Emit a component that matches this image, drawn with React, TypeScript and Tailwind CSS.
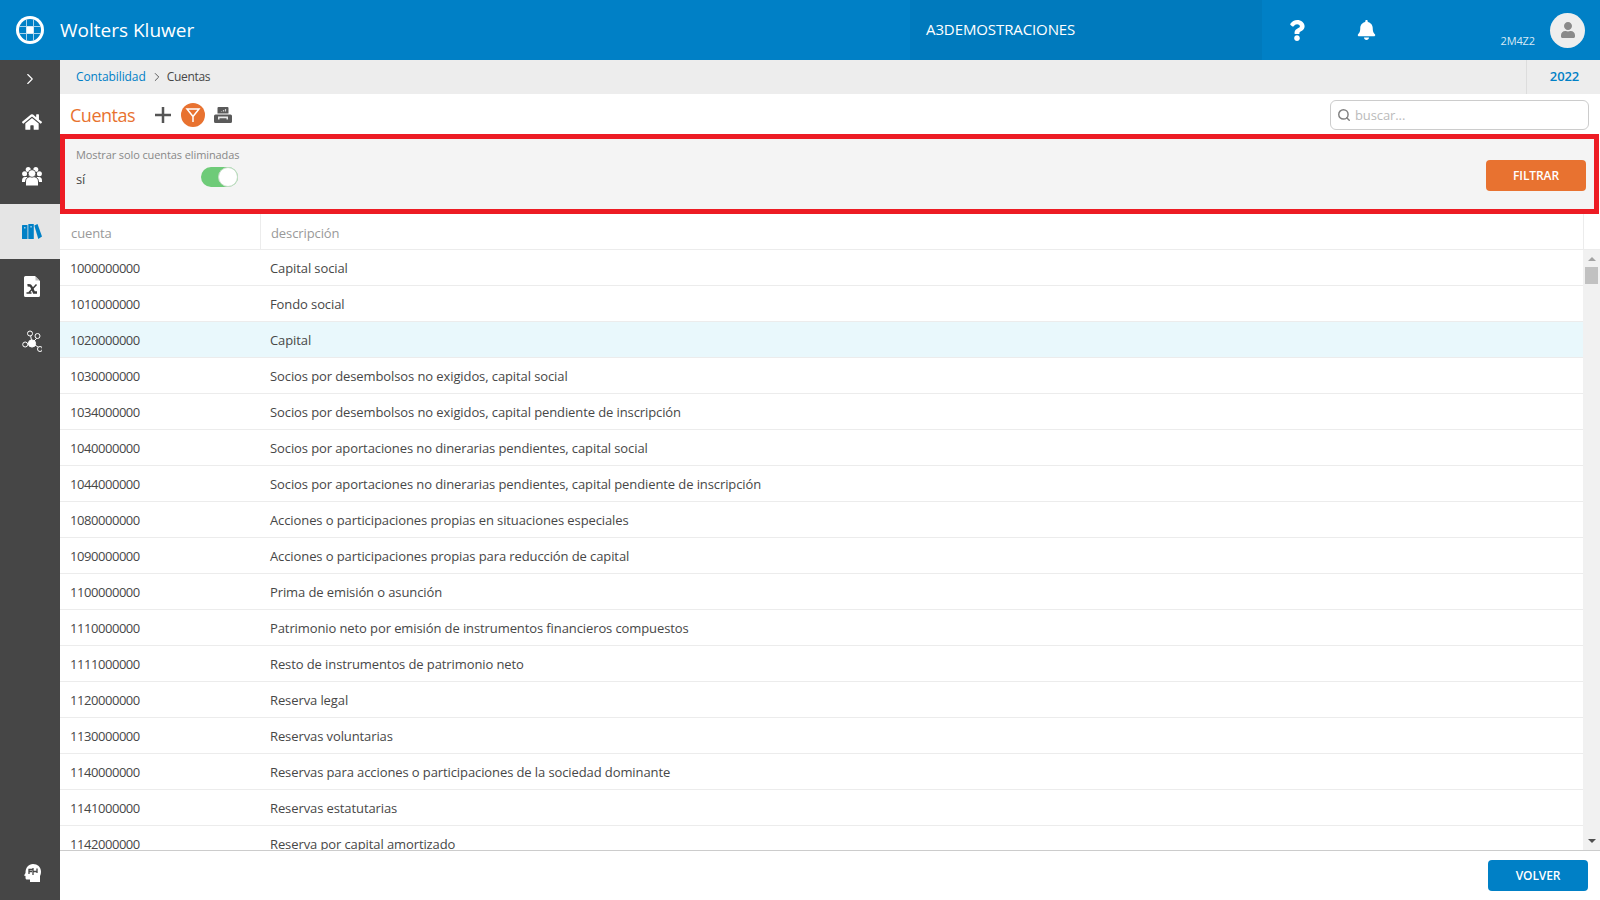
import { ChevronRight, Search } from 'lucide-react';
import { FaBell, FaHome, FaQuestion, FaUser } from 'react-icons/fa';

const rows = [
  ['1000000000', 'Capital social'],
  ['1010000000', 'Fondo social'],
  ['1020000000', 'Capital'],
  ['1030000000', 'Socios por desembolsos no exigidos, capital social'],
  ['1034000000', 'Socios por desembolsos no exigidos, capital pendiente de inscripción'],
  ['1040000000', 'Socios por aportaciones no dinerarias pendientes, capital social'],
  ['1044000000', 'Socios por aportaciones no dinerarias pendientes, capital pendiente de inscripción'],
  ['1080000000', 'Acciones o participaciones propias en situaciones especiales'],
  ['1090000000', 'Acciones o participaciones propias para reducción de capital'],
  ['1100000000', 'Prima de emisión o asunción'],
  ['1110000000', 'Patrimonio neto por emisión de instrumentos financieros compuestos'],
  ['1111000000', 'Resto de instrumentos de patrimonio neto'],
  ['1120000000', 'Reserva legal'],
  ['1130000000', 'Reservas voluntarias'],
  ['1140000000', 'Reservas para acciones o participaciones de la sociedad dominante'],
  ['1141000000', 'Reservas estatutarias'],
  ['1142000000', 'Reserva por capital amortizado'],
];

const Logo = () => (
  <svg width="28" height="28" viewBox="0 0 28 28" className="shrink-0">
    <circle cx="14" cy="14" r="14" fill="#fff" />
    <circle cx="14" cy="14" r="11" fill="#0080c6" />
    <path d="M10.500 3v22M17.500 3v22M3 10.500h22M3 17.500h22" stroke="#a9d3ec" strokeWidth="1" />
    <rect x="10.500" y="10.500" width="7" height="7" fill="#fff" />
  </svg>
);

const UsersIcon = () => (
  <svg width="20" height="19" viewBox="0 0 20 19" fill="#fff">
    <circle cx="6.200" cy="2.600" r="2.500" />
    <circle cx="13.800" cy="2.600" r="2.500" />
    <circle cx="2.600" cy="6.800" r="2.500" />
    <circle cx="17.400" cy="6.800" r="2.500" />
    <path d="M0 14c0-3 1.200-4 3-4h14c1.800 0 3 1 3 4v1H0z" />
    <path d="M3.500 19v-4c0-3.500 2-5.500 6.500-5.500s6.500 2 6.500 5.500v4z" stroke="#464646" strokeWidth="1" />
    <circle cx="10" cy="6.500" r="3.800" stroke="#464646" strokeWidth="0.800" />
  </svg>
);

const BooksIcon = () => (
  <svg width="20" height="15" viewBox="0 0 20 15" fill="#0080c6">
    <rect x="0" y="1" width="5.500" height="14" rx="0.500" />
    <rect x="6.300" y="0" width="5.500" height="15" rx="0.500" />
    <path d="M12.300 1.500 15.500 0 20 12.500 16.300 15z" />
    <rect x="2" y="3" width="1.500" height="1.500" fill="#9ccbe8" />
    <rect x="8.300" y="2" width="1.500" height="1.500" fill="#9ccbe8" />
  </svg>
);

const FileIcon = () => (
  <svg width="16" height="21" viewBox="0 0 16 21">
    <path d="M1.500 0H11l5 5v14.500a1.500 1.500 0 0 1-1.500 1.500h-13A1.500 1.500 0 0 1 0 19.500v-18A1.500 1.500 0 0 1 1.500 0z" fill="#fff" />
    <path d="M11.500 0.500 15.500 4.500h-4z" fill="#bdbdbd" />
    <path d="M3.500 9.500c2-.6 3.200 0 4 1.500l2.500 5.500h3" fill="none" stroke="#3c3c3c" strokeWidth="2.400" />
    <path d="M12.500 8.500 5 16.500M2.500 17h5" fill="none" stroke="#3c3c3c" strokeWidth="1.500" />
  </svg>
);

const NetworkIcon = () => (
  <svg width="20" height="24" viewBox="0 0 20 24" fill="none" stroke="#fff" strokeWidth="1">
    <path d="M10 13 8.500 5M10 13l5-5M10 13l-6 1.500M10 13l7.500 5" />
    <circle cx="10" cy="13.500" r="3.600" fill="#fff" />
    <circle cx="8" cy="3.500" r="2.500" fill="#464646" />
    <circle cx="15.500" cy="6" r="2.500" fill="#464646" />
    <circle cx="3.200" cy="14.500" r="2.500" fill="#464646" />
    <circle cx="18" cy="19" r="2.500" fill="#464646" />
  </svg>
);

const HeadIcon = () => (
  <svg width="17" height="18" viewBox="0 0 17 18">
    <path d="M9 0c4.500 0 8 3 8 7.500 0 2-.5 3.500-1 4.500v6H6v-2.500H3c-1 0-1.500-.7-1.500-1.500v-2L0 11.500 1.500 9C1.500 3.500 4.500 0 9 0z" fill="#fff" />
    <path d="M5 10V5.500h4M5.500 7.500H8M9 4v7M9 7.500h4M13 4.500V9" fill="none" stroke="#464646" strokeWidth="1.300" />
  </svg>
);

const PrintIcon = () => (
  <svg width="18" height="16" viewBox="0 0 18 16">
    <path d="M3.500 1a1 1 0 0 1 1-1h9a1 1 0 0 1 1 1v5.500h-11z" fill="#5a5a5a" />
    <path d="M7.500 4.500V4M9.500 4.500V3M11.500 4.500V2" stroke="#d0d0d0" strokeWidth="1.200" />
    <path d="M0 9a1.500 1.500 0 0 1 1.500-1.500h15A1.500 1.500 0 0 1 18 9v5.500a1.500 1.500 0 0 1-1.500 1.500h-15A1.500 1.500 0 0 1 0 14.500z" fill="#5a5a5a" />
    <path d="M4 9.500h10v3h-1.500v-1.300h-7v1.300H4z" fill="#e8e8e8" />
  </svg>
);

const navItems = [
  { key: 'home', icon: <FaHome className="h-[18px] w-5" /> },
  { key: 'users', icon: <UsersIcon /> },
  { key: 'books', icon: <BooksIcon />, active: true },
  { key: 'file', icon: <FileIcon /> },
  { key: 'network', icon: <NetworkIcon /> },
];

const App = () => {
  return (
    <div className="flex h-[900px] w-[1600px] flex-col overflow-hidden bg-white font-['Open_Sans',sans-serif] text-[13px] tracking-[-0.1px] text-[#474747]">
      <header className="flex h-[60px] shrink-0 items-center bg-[#0080c6] text-white">
        <div className="flex w-[910px] items-center gap-4 pl-4">
          <Logo />
          <span className="text-[19px] tracking-normal">Wolters Kluwer</span>
        </div>
        <div className="flex h-full w-[352px] items-center bg-[#007abd] pb-0.5 pl-4 text-[15px]">A3DEMOSTRACIONES</div>
        <FaQuestion className="ml-[27px] h-[21px] w-4" />
        <FaBell className="ml-[52px] h-5 w-[19px]" />
        <span className="ml-auto mr-[15px] mt-[23px] text-[11px] text-[#d6e9f5]">2M4Z2</span>
        <div className="mr-[15px] flex h-[35px] w-[35px] items-center justify-center rounded-full bg-[#eeeeee] text-[#8a8a8a]">
          <FaUser className="h-4 w-3.5" />
        </div>
      </header>
      <div className="flex min-h-0 flex-1">
        <aside className="flex w-[60px] shrink-0 flex-col bg-[#464646] text-white">
          <div className="flex h-[34px] items-center justify-center pt-1">
            <ChevronRight className="h-[18px] w-[18px]" strokeWidth={1.500} />
          </div>
          {navItems.map((item) => (
            <div key={item.key} className={`flex h-[55px] items-center justify-center pl-1 ${item.active ? 'bg-[#e5e5e5]' : ''}`}>
              {item.icon}
            </div>
          ))}
          <div className="mt-auto flex h-[55px] items-center justify-center pl-1">
            <HeadIcon />
          </div>
        </aside>
        <main className="flex min-w-0 flex-1 flex-col">
          <div className="flex h-[34px] shrink-0 items-center bg-[#ededed] pl-4 text-xs">
            <span className="text-[#0080c6]">Contabilidad</span>
            <ChevronRight className="ml-1 mr-[3px] h-3.5 w-3.5" strokeWidth={1.500} />
            <span className="tracking-[-0.3px]">Cuentas</span>
            <span className="ml-auto flex h-full w-[74px] items-center justify-center border-l border-[#dddddd] pl-0.5 text-[13px] font-semibold text-[#0080c6]">2022</span>
          </div>
          <div className="flex h-10 shrink-0 items-center pl-2.5 pr-[11px] pt-0.5">
            <span className="text-[18px] tracking-[-0.5px] text-[#e87230]">Cuentas</span>
            <svg width="16" height="16" viewBox="0 0 16 16" className="ml-5">
              <path d="M8 0v16M0 8h16" stroke="#555555" strokeWidth="2.500" />
            </svg>
            <div className="ml-[10px] flex h-6 w-6 items-center justify-center rounded-full bg-[#e87230]">
              <svg width="18" height="18" viewBox="0 0 18 18" fill="none" stroke="#fff" strokeWidth="1.500">
                <path d="M3 3h12L9 10.500zM9 10.500V16" />
              </svg>
            </div>
            <div className="ml-[9px]">
              <PrintIcon />
            </div>
            <div className="ml-auto flex h-[30px] w-[259px] items-center rounded-md border border-[#cccccc] pl-1.5 text-[#bbbbbb]">
              <Search className="mr-1 h-3.5 w-3.5 text-[#808080]" strokeWidth={2.500} />
              <span className="pt-0.5">buscar...</span>
            </div>
          </div>
          <div className="mr-px flex h-20 shrink-0 items-start justify-between border-[5px] border-[#ed1c24] bg-[#f4f4f4] pl-[11px] pr-2">
            <div className="w-[162px] pt-2">
              <div className="h-4 whitespace-nowrap text-[11px] leading-4 text-[#888888]">Mostrar solo cuentas eliminadas</div>
              <div className="mt-1 flex h-5 items-center justify-between">
                <span className="pt-[5px]">sí</span>
                <div className="flex h-5 w-[37px] justify-end rounded-full bg-[#6ecb78]">
                  <div className="h-5 w-5 rounded-full border border-[#c5dcc7] bg-white" />
                </div>
              </div>
            </div>
            <button className="mt-[21px] h-[31px] w-[100px] rounded-sm bg-[#e87230] text-xs font-semibold text-white">FILTRAR</button>
          </div>
          <div className="flex h-9 shrink-0 border-b border-[#ececec] text-[#999999]">
            <div className="flex w-[201px] items-center border-r border-[#ececec] pl-[11px] pt-1">cuenta</div>
            <div className="flex flex-1 items-center pl-[10px] pt-1">descripción</div>
            <div className="w-[17px] border-l border-[#ececec]" />
          </div>
          <div className="flex min-h-0 flex-1">
            <div className="min-w-0 flex-1 overflow-hidden">
              {rows.map(([code, name]) => (
                <div key={code} className={`flex h-9 items-center border-b border-[#ececec] pt-0.5 ${code === '1020000000' ? 'bg-[#e9f8fc]' : ''}`}>
                  <div className="w-[200px] pl-2.5 tracking-[-0.45px]">{code}</div>
                  <div className="pl-2.5">{name}</div>
                </div>
              ))}
            </div>
            <div className="flex w-[17px] shrink-0 flex-col items-center bg-[#f1f1f1] pt-[7px] pb-[7px]">
              <svg width="8" height="4" viewBox="0 0 8 4" fill="#a3a3a3"><path d="M0 4 4 0l4 4z" /></svg>
              <div className="mt-1.5 h-[17px] w-[13px] bg-[#c1c1c1]" />
              <svg width="8" height="4" viewBox="0 0 8 4" fill="#505050" className="mt-auto"><path d="M0 0h8L4 4z" /></svg>
            </div>
          </div>
          <div className="flex h-[50px] shrink-0 items-center justify-end border-t border-[#cccccc] pr-3">
            <button className="h-[31px] w-[100px] rounded-sm bg-[#0080c6] text-xs font-semibold text-white">VOLVER</button>
          </div>
        </main>
      </div>
    </div>
  );
};

export default App;
